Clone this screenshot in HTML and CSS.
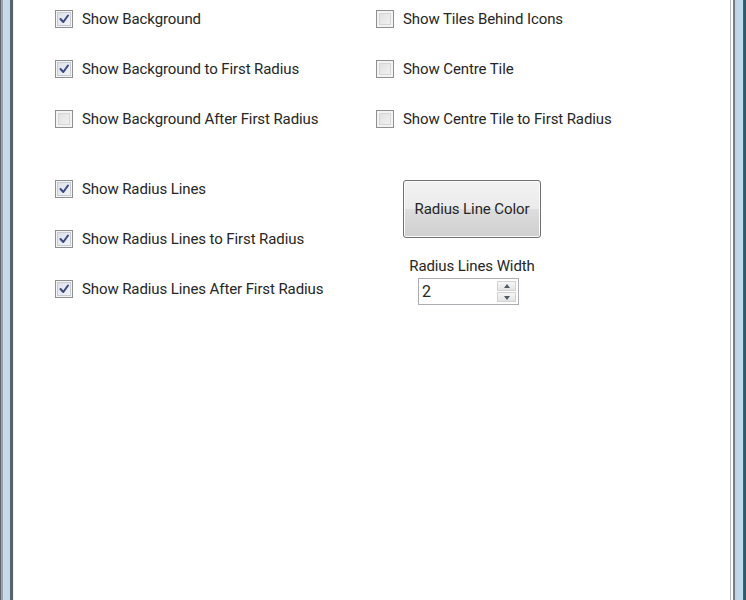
FILE: index.html
```html
<!DOCTYPE html>
<html lang="en">
<head>
    <meta charset="UTF-8">
    <title>Tile Options</title>
    <link rel="stylesheet" href="styles.css">
</head>
<body>
    <div class="window">
        <div class="edge-left"></div>
        <div class="client">
            <div class="group">
                <div class="column">
                    <label class="check"><span class="box checked"><svg viewBox="0 0 16 16"><path d="M4.5 8 L7.3 11 L12 4.5"/></svg></span>Show Background</label>
                    <label class="check"><span class="box checked"><svg viewBox="0 0 16 16"><path d="M4.5 8 L7.3 11 L12 4.5"/></svg></span>Show Background to First Radius</label>
                    <label class="check"><span class="box"></span>Show Background After First Radius</label>
                </div>
                <div class="column">
                    <label class="check"><span class="box"></span>Show Tiles Behind Icons</label>
                    <label class="check"><span class="box"></span>Show Centre Tile</label>
                    <label class="check"><span class="box"></span>Show Centre Tile to First Radius</label>
                </div>
            </div>

            <div class="group second">
                <div class="column">
                    <label class="check"><span class="box checked"><svg viewBox="0 0 16 16"><path d="M4.5 8 L7.3 11 L12 4.5"/></svg></span>Show Radius Lines</label>
                    <label class="check"><span class="box checked"><svg viewBox="0 0 16 16"><path d="M4.5 8 L7.3 11 L12 4.5"/></svg></span>Show Radius Lines to First Radius</label>
                    <label class="check"><span class="box checked"><svg viewBox="0 0 16 16"><path d="M4.5 8 L7.3 11 L12 4.5"/></svg></span>Show Radius Lines After First Radius</label>
                </div>
                <div class="column lines">
                    <button class="color-btn">Radius Line Color</button>
                    <div class="width-field">
                        <span class="field-label">Radius Lines Width</span>
                        <div class="spinner">
                            <span class="value">2</span>
                            <div class="arrows">
                                <span class="arrow up"></span>
                                <span class="arrow down"></span>
                            </div>
                        </div>
                    </div>
                </div>
            </div>
        </div>
        <div class="edge-right"></div>
    </div>
</body>
</html>
```

FILE: styles.css
```css
body {
    margin: 0;
    font-family: Roboto, "Liberation Sans", sans-serif;
    font-size: 15px;
    letter-spacing: -0.1px;
    color: #262626;
    background-color: #ffffff;
}

.window {
    display: flex;
    height: 600px;
}

.edge-left {
    width: 14px;
    background: linear-gradient(to right,
        #62666c 0, #62666c 1px,
        #9aa3ad 1px, #9aa3ad 3px,
        #c9dbec 3px, #c4d7ea 10px,
        #5b6168 10px, #5b6168 13px,
        #eef0f3 13px);
}

.edge-right {
    width: 16px;
    background: linear-gradient(to right,
        #b9b9b9 0, #b9b9b9 1px,
        #ffffff 1px, #ffffff 3px,
        #7f8690 3px, #6d747c 5px,
        #bcd2e6 5px, #c6dbee 13px,
        #2f6e7c 13px, #1f5563 16px);
}

.client {
    flex: 1;
    padding: 10px 0 0 41px;
}

/* Check boxes */
.group {
    display: grid;
    grid-template-columns: 321px auto;
}

.group.second {
    margin-top: 52px;
}

.column {
    display: flex;
    flex-direction: column;
    gap: 32px;
}

.check {
    display: flex;
    align-items: center;
    height: 18px;
    gap: 9px;
    cursor: default;
}

.box {
    width: 16px;
    height: 16px;
    border: 1px solid #8e8f8f;
    background: linear-gradient(135deg, #dcdcdc, #f6f6f6);
    box-shadow: inset 0 0 0 2px #f3f3f3, inset 0 0 0 3px #d6d6d6;
    flex-shrink: 0;
}

.box.checked {
    background: linear-gradient(135deg, #d8dde6, #f4f6fa);
    box-shadow: inset 0 0 0 1px #f4f4f4, inset 0 0 0 2px #c5cad3;
}

.box svg {
    display: block;
    width: 16px;
    height: 16px;
}

.box path {
    fill: none;
    stroke: #3a4880;
    stroke-width: 2;
    stroke-linecap: round;
    stroke-linejoin: round;
}

/* Radius line settings */
.lines {
    gap: 0;
    padding-left: 27px;
    align-items: flex-start;
}

.color-btn {
    width: 138px;
    height: 58px;
    font-family: Roboto, "Liberation Sans", sans-serif;
    font-size: 15px;
    letter-spacing: -0.1px;
    color: #262626;
    border: 1px solid #707070;
    border-radius: 3px;
    background: linear-gradient(to bottom, #f2f2f2 0%, #ebebeb 50%, #dddddd 50%, #cfcfcf 100%);
    box-shadow: inset 0 0 0 1px #fbfbfb;
}

.width-field {
    width: 138px;
    display: flex;
    flex-direction: column;
    align-items: center;
    margin-top: 19px;
}

.field-label {
    line-height: 18px;
}

.spinner {
    display: flex;
    align-items: center;
    justify-content: space-between;
    width: 99px;
    height: 25px;
    margin-top: 3px;
    margin-right: 7px;
    border: 1px solid #abadb3;
    background-color: #ffffff;
}

.value {
    padding-left: 3px;
    font-size: 16px;
}

.arrows {
    display: flex;
    flex-direction: column;
    gap: 1px;
    margin-right: 2px;
}

.arrow {
    width: 19px;
    height: 10px;
    border: 1px solid #d2d2d2;
    background: linear-gradient(to bottom, #f7f7f7, #e4e4e4);
    position: relative;
    box-sizing: border-box;
}

.arrow::after {
    content: "";
    position: absolute;
    left: 6px;
    border-left: 3px solid transparent;
    border-right: 3px solid transparent;
}

.arrow.up::after {
    top: 2px;
    border-bottom: 4px solid #4d5a68;
}

.arrow.down::after {
    top: 3px;
    border-top: 4px solid #4d5a68;
}
```
